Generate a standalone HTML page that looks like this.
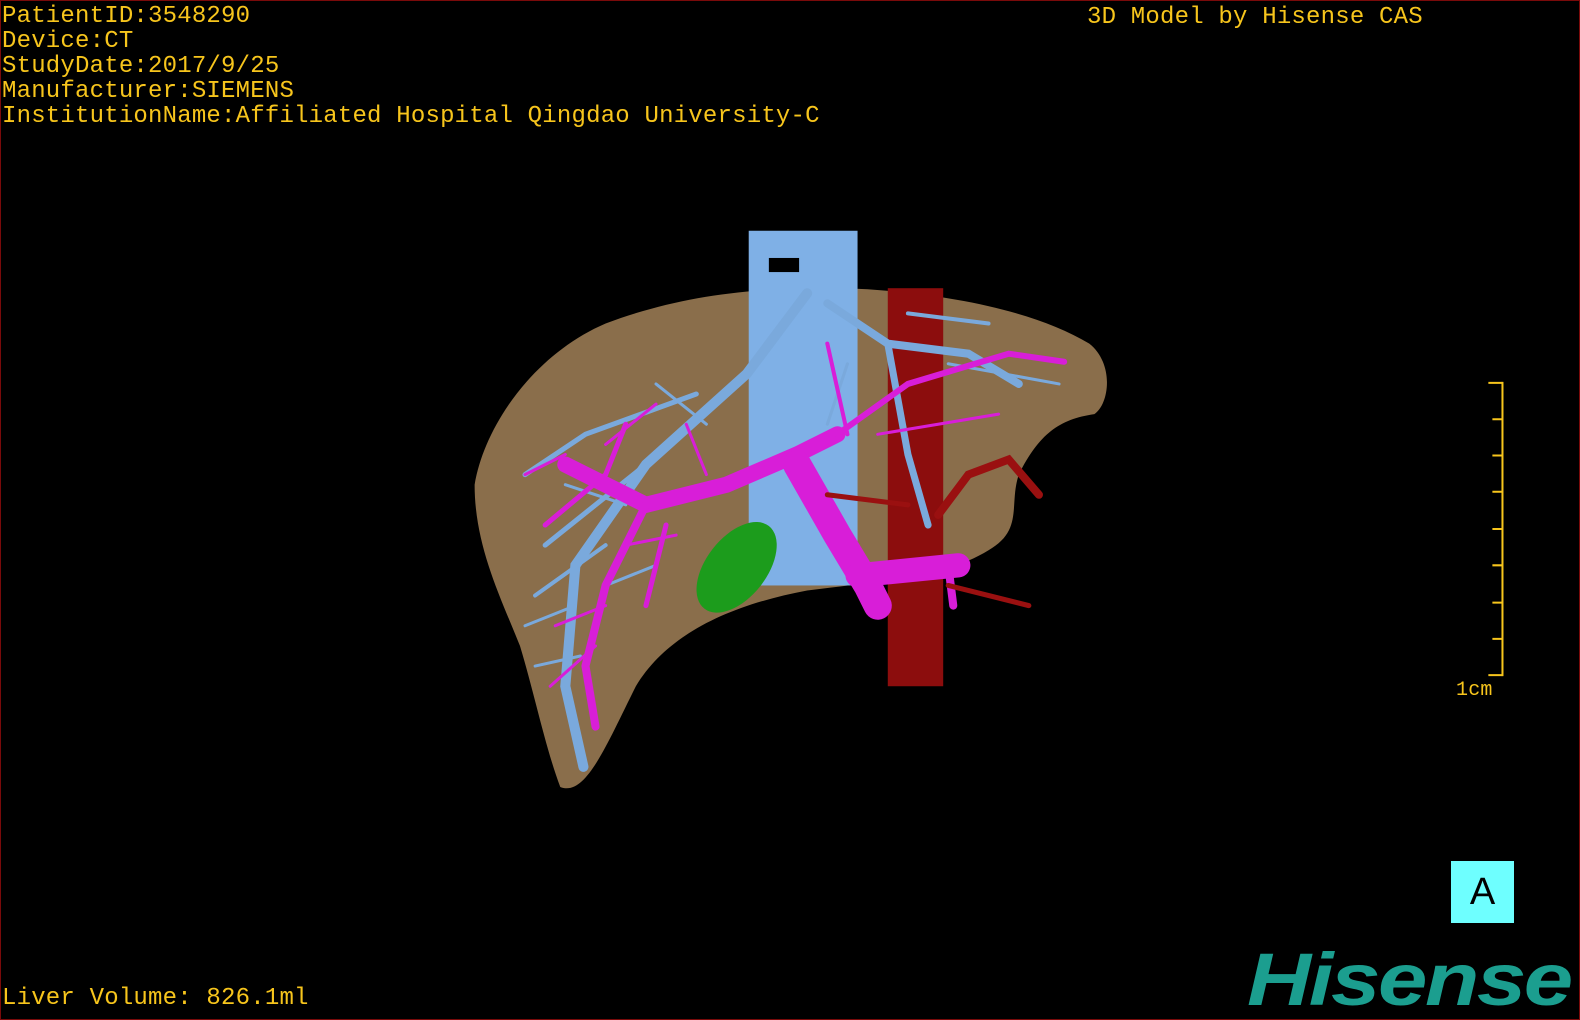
<!DOCTYPE html>
<html><head><meta charset="utf-8"><style>
html,body{margin:0;padding:0;background:#000;}
#s{position:relative;width:1580px;height:1020px;overflow:hidden;background:#000;box-sizing:border-box;border:1px solid #7a0a0a;}
.t{position:absolute;font-family:"Liberation Mono",monospace;font-size:24px;letter-spacing:0.2px;color:#f7c51c;white-space:pre;line-height:25px;}
.logo{position:absolute;left:1246px;top:942px;font-family:"Liberation Sans",sans-serif;font-weight:bold;font-style:italic;font-size:74px;color:#1b9e8f;letter-spacing:-2px;line-height:74px;transform:scaleX(1.2);transform-origin:left;}
</style></head><body><div id="s">
<div class="t" style="left:1px;top:3px">PatientID:3548290
Device:CT
StudyDate:2017/9/25
Manufacturer:SIEMENS
InstitutionName:Affiliated Hospital Qingdao University-C</div>
<div class="t" style="left:1086px;top:4px">3D Model by Hisense CAS</div>
<div class="t" style="left:1px;top:985px">Liver Volume: 826.1ml</div>
<svg width="1580" height="1020" style="position:absolute;left:0;top:0">
<g transform="scale(1.0077)">
<path d="M470,480 C480,420 530,350 600,320 C680,290 760,282 860,286 C950,292 1030,310 1080,340 C1105,360 1100,400 1085,410 C1050,415 1030,430 1010,470 C1000,500 1015,525 980,545 C940,570 880,575 800,585 C720,600 660,630 630,680 C600,740 580,790 555,780 C540,740 530,690 515,640 C495,590 470,540 470,480 Z" fill="#8a6e4b"/>
<rect x="742" y="228" width="108" height="352" fill="#7fb0e6"/>
<rect x="762" y="255" width="30" height="14" fill="#000"/>
<rect x="880" y="285" width="55" height="395" fill="#8c0d0d"/>
<g stroke="#7aa9dc" fill="none" stroke-linecap="round">
<path d="M800,290 L740,370 L640,460 L570,560 L560,680 L578,760" stroke-width="10"/>
<path d="M820,300 L880,340 L960,350 L1010,380" stroke-width="8"/>
<path d="M880,340 L900,450 L920,520" stroke-width="7"/>
<path d="M690,390 L580,430 L520,470" stroke-width="5"/>
<path d="M640,460 L540,540" stroke-width="5"/>
<path d="M600,540 L530,590" stroke-width="4"/>
<path d="M900,310 L980,320" stroke-width="4"/>
<path d="M940,360 L1050,380" stroke-width="3"/>
<path d="M570,600 L520,620 M575,650 L530,660 M600,580 L650,560 M620,500 L560,480 M700,420 L650,380 M840,360 L820,420" stroke-width="3"/>
</g>
<g stroke="#d81ed8" fill="none" stroke-linecap="round">
<path d="M560,460 L640,500 L720,480 L790,450 L830,430" stroke-width="16"/>
<path d="M790,460 L830,530 L860,580 L870,600" stroke-width="28"/>
<path d="M850,570 L950,560" stroke-width="24"/>
<path d="M640,500 L600,580 L580,660 L590,720" stroke-width="8"/>
<path d="M830,430 L900,380 L1000,350 L1055,358" stroke-width="6"/>
<path d="M870,430 L990,410" stroke-width="3"/>
<path d="M620,420 L600,470 L540,520" stroke-width="5"/>
<path d="M560,450 L520,470" stroke-width="3"/>
<path d="M660,520 L640,600" stroke-width="5"/>
<path d="M820,340 L840,430" stroke-width="4"/>
<path d="M940,560 L945,600" stroke-width="8"/>
<path d="M600,600 L550,620 M590,640 L545,680 M620,540 L670,530 M600,440 L650,400 M700,470 L680,420" stroke-width="3"/>
</g>
<g stroke="#9a1010" fill="none" stroke-linecap="round">
<path d="M930,510 L960,470 L1000,455 L1030,490" stroke-width="8"/>
<path d="M940,580 L1020,600" stroke-width="5"/>
<path d="M900,500 L820,490" stroke-width="5"/>
</g>
<ellipse cx="730" cy="562" rx="30" ry="52" transform="rotate(38 730 562)" fill="#1c9c1c"/>
<g stroke="#f7c51c" stroke-width="2" fill="none">
<path d="M1490,378 V670"/>
<path d="M1476,379 H1490 M1480,415 H1490 M1480,451 H1490 M1480,487 H1490 M1480,524 H1490 M1480,560 H1490 M1480,597 H1490 M1480,633 H1490 M1476,669 H1490"/>
</g>
</g>
</svg>
<div class="t" style="left:1455px;top:677px;font-size:20px">1cm</div>
<div style="position:absolute;left:1450px;top:860px;width:63px;height:62px;background:#6effff;color:#000;font-family:'Liberation Sans',sans-serif;font-size:38px;text-align:center;line-height:62px">A</div>
<div class="logo">Hisense</div>
</div></body></html>
